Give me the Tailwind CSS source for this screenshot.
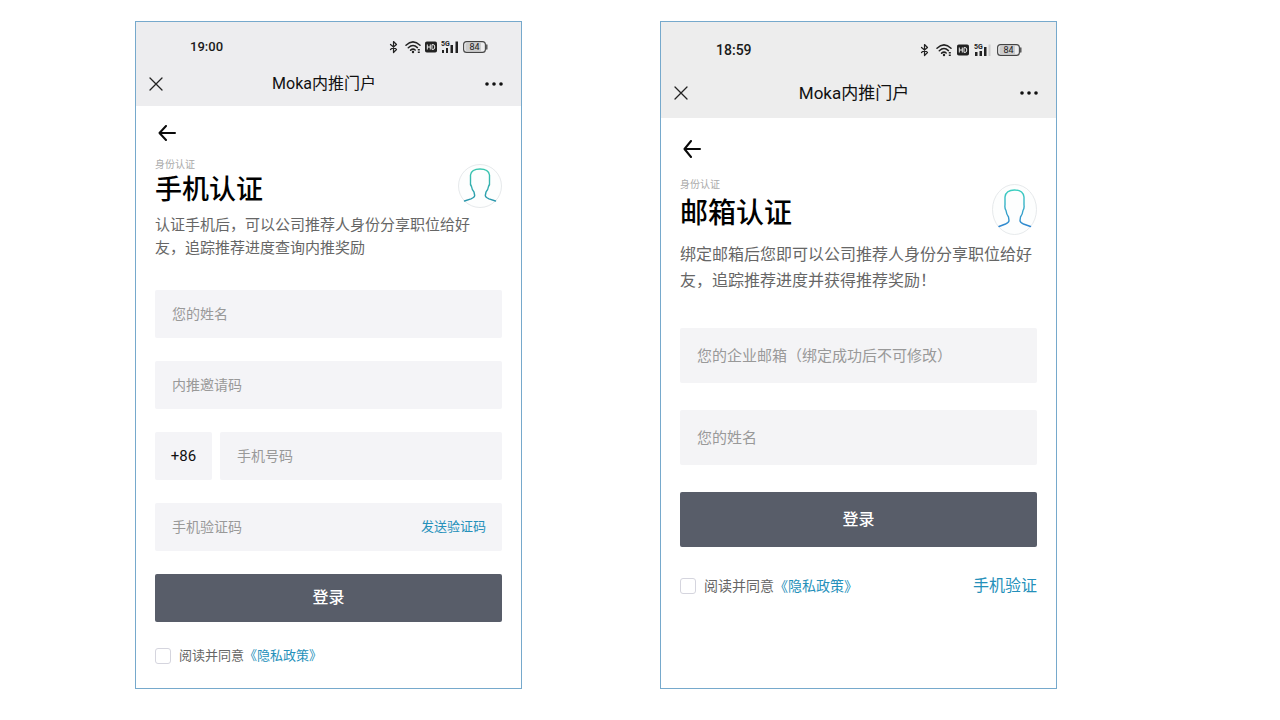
<!DOCTYPE html>
<html lang="zh-CN">
<head>
<meta charset="utf-8">
<meta name="viewport" content="width=device-width, initial-scale=1">
<title>Moka内推门户</title>
<script src="https://cdn.jsdelivr.net/npm/@tailwindcss/browser@4"></script>
</head>
<body class="bg-white font-[Roboto,'Noto_Sans_CJK_SC',sans-serif] text-black">
<svg class="absolute h-0 w-0" aria-hidden="true">
  <defs>
    <linearGradient id="face" x1="0" y1="0" x2="0" y2="1">
      <stop offset="0" stop-color="#3cc8b0"/><stop offset="1" stop-color="#2a97ad"/>
    </linearGradient>
    <linearGradient id="face-blue" x1="0" y1="0" x2="0" y2="1">
      <stop offset="0" stop-color="#3ccfc0"/><stop offset="1" stop-color="#2f86d0"/>
    </linearGradient>
    <symbol id="bluetooth" viewBox="0 0 9 14"><path d="M1.500 4.500l6 5-3 3V1.500l3 3-6 5" fill="none" stroke="#222" stroke-width="1.200" stroke-linejoin="round" stroke-linecap="round"/></symbol>
    <symbol id="wifi" viewBox="0 0 16 14"><g fill="none" stroke="#222" stroke-width="1.500" stroke-linecap="round"><path d="M1 5.200Q8-1.400 15 5.200M3.300 7.800Q8 3.400 12.400 7.600M5.600 10.200Q8 8.200 10.200 10"/></g><circle cx="8" cy="12" r="1.200" fill="#222"/><path d="M12.800 9h2v1.500h-2zM12.800 11.500h2V13h-2z" fill="#222"/></symbol>
    <symbol id="hd" viewBox="0 0 12 12"><rect y=".5" width="12" height="11" rx="1.800" fill="#222"/><path d="M2.300 3.500v5M5.300 3.500v5M2.300 6h3M7 3.500v5h.8q2 0 2-2.500t-2-2.500z" fill="none" stroke="#eee" stroke-width="1"/></symbol>
    <symbol id="battery" viewBox="0 0 25 12"><rect x=".6" y=".6" width="21.800" height="10.800" rx="3" fill="#ededee" stroke="#444" stroke-width="1.100"/><path d="M4 2h14v8H4a1.500 1.500 0 01-1.500-1.500v-5A1.500 1.500 0 014 2z" fill="#ccc"/><path d="M23.800 4v4" stroke="#444" stroke-width="1.300" stroke-linecap="round"/><text x="11.500" y="9.200" text-anchor="middle" font-family="Roboto" font-size="9" fill="#222">84</text></symbol>
    <symbol id="close" viewBox="0 0 14 14"><path d="M1 1l12 12M13 1L1 13" stroke="#222" stroke-width="1.300" stroke-linecap="round"/></symbol>
    <symbol id="more" viewBox="0 0 18 6"><g fill="#111"><circle cx="2" cy="3" r="1.800"/><circle cx="9" cy="3" r="1.800"/><circle cx="16" cy="3" r="1.800"/></g></symbol>
    <symbol id="back" viewBox="0 0 18 16"><path d="M8 1L1.500 8 8 15M1.500 8H17" fill="none" stroke="#0a0a0a" stroke-width="2" stroke-linecap="round" stroke-linejoin="round"/></symbol>
  </defs>
</svg>

<main class="grid grid-cols-[387fr_397fr] gap-x-[14.97%] pt-[21px] pr-[17.42%] pl-[10.55%]">

  <section class="flex min-h-[668px] flex-col border border-[#76a9cc]">
    <header class="bg-[#ededef] pt-[15px] pb-[10px]">
      <div class="flex h-5 items-center justify-between pr-[33px] pl-[54px]">
        <span class="text-[13px] leading-5 font-medium text-[#1a1a1a]">19:00</span>
        <div class="flex items-center gap-1">
          <svg class="mr-[3px] h-3.5 w-[9px]"><use href="#bluetooth"/></svg>
          <svg class="h-3.5 w-4"><use href="#wifi"/></svg>
          <svg class="h-3 w-3"><use href="#hd"/></svg>
          <svg class="h-3.5 w-[18px]" viewBox="0 0 18 14"><text x="0" y="6" font-family="Roboto" font-weight="700" font-size="7" fill="#222">5G</text><path d="M1 10h2v3H1zM5 8h2v5H5zM9.500 5H12v8H9.500zM14.500 1.500H17V13h-2.500z" fill="#222"/></svg>
          <svg class="h-3 w-[25px]"><use href="#battery"/></svg>
        </div>
      </div>
      <div class="mt-[15px] flex h-6 items-center justify-between pr-[18px] pl-[13px]">
        <button type="button" aria-label="关闭"><svg class="h-3.5 w-3.5"><use href="#close"/></svg></button>
        <h1 class="text-base leading-6 text-[#111]">Moka内推门户</h1>
        <button type="button" aria-label="更多"><svg class="h-1.5 w-[18px]"><use href="#more"/></svg></button>
      </div>
    </header>
    <form class="flex flex-col px-[19px] pt-[17px]">
      <button type="button" aria-label="返回" class="flex h-5 w-6 items-center justify-center"><svg class="h-4 w-[18px]"><use href="#back"/></svg></button>
      <div class="mt-[15px] flex items-end justify-between">
        <div>
          <p class="text-[10px] leading-[14px] text-[#aaa]">身份认证</p>
          <h2 class="text-[27px] leading-9 font-medium">手机认证</h2>
        </div>
        <svg class="h-11 w-11" viewBox="0 0 44 44"><circle cx="22" cy="22" r="21.500" fill="#fdfefe" stroke="#dfe3e6" stroke-width=".8"/><path d="M6.500 37L13 34.800Q16.500 33.500 16.700 31.500L16 28Q14 26 13.500 22.500Q12 20.500 12.500 17.500V11Q13.500 5 22 5T31.500 11V17.500Q32 20.500 30.500 22.500Q30 26 28 28L27.300 31.500Q27.500 33.500 31 34.800L37.500 37" fill="none" stroke="url(#face)" stroke-width="1.400" stroke-linecap="round" stroke-linejoin="round"/></svg>
      </div>
      <p class="mt-1.5 pr-5 text-[15px] leading-[23px] text-[#666]">认证手机后，可以公司推荐人身份分享职位给好友，追踪推荐进度查询内推奖励</p>
      <div class="mt-[30px] flex flex-col gap-[23px]">
        <input type="text" aria-label="您的姓名" placeholder="您的姓名" class="h-12 w-full rounded-xs bg-[#f4f4f7] px-[17px] text-sm placeholder:text-[#999]">
        <input type="text" aria-label="内推邀请码" placeholder="内推邀请码" class="h-12 w-full rounded-xs bg-[#f4f4f7] px-[17px] text-sm placeholder:text-[#999]">
        <div class="flex gap-2">
          <button type="button" aria-label="国家区号 +86" class="h-12 w-[57px] rounded-xs bg-[#f4f4f7] text-[15px] text-[#111]">+86</button>
          <input type="tel" aria-label="手机号码" placeholder="手机号码" class="h-12 min-w-0 flex-1 rounded-xs bg-[#f4f4f7] px-[17px] text-sm placeholder:text-[#999]">
        </div>
        <div class="flex h-12 items-center rounded-xs bg-[#f4f4f7] pr-4">
          <input type="text" aria-label="手机验证码" placeholder="手机验证码" class="h-full min-w-0 flex-1 bg-transparent px-[17px] text-sm placeholder:text-[#999]">
          <button type="button" class="text-[13px] text-[#2590ba]">发送验证码</button>
        </div>
        <button type="submit" class="h-12 rounded-xs bg-[#585d69] text-base font-medium text-white">登录</button>
      </div>
      <div class="mt-6 flex h-5 items-center">
        <input id="agree-phone" type="checkbox" class="h-4 w-4 appearance-none rounded-[3px] border border-[#d5d5de] bg-white checked:bg-[#585d69]">
        <label for="agree-phone" class="pl-2 text-[13px] leading-5 text-[#666]">阅读并同意</label>
        <a href="#privacy" class="text-[13px] leading-5 text-[#2590ba]">《隐私政策》</a>
      </div>
    </form>
  </section>

  <section class="flex min-h-[668px] flex-col border border-[#76a9cc]">
    <header class="bg-[#ededed] pt-[18px] pb-[13px]">
      <div class="flex h-5 items-center justify-between pr-[34px] pl-[55px]">
        <span class="text-sm leading-5 font-medium text-[#1a1a1a]">18:59</span>
        <div class="flex items-center gap-[5px]">
          <svg class="mr-[2px] h-3.5 w-[9px]"><use href="#bluetooth"/></svg>
          <svg class="h-3.5 w-4"><use href="#wifi"/></svg>
          <svg class="h-3 w-3"><use href="#hd"/></svg>
          <svg class="h-3.5 w-[18px]" viewBox="0 0 18 14"><text x="0" y="6" font-family="Roboto" font-weight="700" font-size="7" fill="#222">5G</text><path d="M1 9h2.500v4H1zM5.500 8H8v5H5.500zM10 4h2.500v9H10z" fill="#222"/><path d="M14.500 1.500h2V13h-2z" fill="#ccc"/></svg>
          <svg class="h-3 w-[25px]"><use href="#battery"/></svg>
        </div>
      </div>
      <div class="mt-[21px] flex h-6 items-center justify-between pr-[18px] pl-[13px]">
        <button type="button" aria-label="关闭"><svg class="h-3.5 w-3.5"><use href="#close"/></svg></button>
        <h1 class="text-[17px] leading-6 text-[#111]">Moka内推门户</h1>
        <button type="button" aria-label="更多"><svg class="h-1.5 w-[18px]"><use href="#more"/></svg></button>
      </div>
    </header>
    <form class="flex flex-col px-[19px] pt-[21px]">
      <button type="button" aria-label="返回" class="flex h-5 w-6 items-center justify-center"><svg class="h-[18px] w-[18px]" viewBox="0 0 18 18"><path d="M8 1L1.500 9 8 17M1.500 9H17" fill="none" stroke="#0a0a0a" stroke-width="2" stroke-linecap="round" stroke-linejoin="round"/></svg></button>
      <div class="mt-[19px] flex items-end justify-between">
        <div>
          <p class="text-[10px] leading-[14px] text-[#aaa]">身份认证</p>
          <h2 class="text-[28px] leading-[43px] font-medium">邮箱认证</h2>
        </div>
        <svg class="h-[51px] w-[45px]" viewBox="0 0 45 51"><ellipse cx="22.500" cy="25.500" rx="22" ry="25" fill="#fdfefe" stroke="#dfe3e6" stroke-width=".8"/><path d="M7 42.500L13.500 40Q17 38.500 17 36.500L16.500 33Q14.500 30.500 14 26.500Q12.500 24 13 21V13Q14 6 22.500 6T32 13V21Q32.500 24 31 26.500Q30.500 30.500 28.500 33L28 36.500Q28 38.500 31.500 40L38.500 42.500" fill="none" stroke="url(#face-blue)" stroke-width="1.400" stroke-linecap="round" stroke-linejoin="round"/></svg>
      </div>
      <p class="mt-[7px] text-base leading-[26px] text-[#666]">绑定邮箱后您即可以公司推荐人身份分享职位给好友，追踪推荐进度并获得推荐奖励！</p>
      <div class="mt-[34px] flex flex-col gap-[27px]">
        <input type="email" aria-label="您的企业邮箱" placeholder="您的企业邮箱（绑定成功后不可修改）" class="h-[55px] w-full rounded-xs bg-[#f4f4f6] px-[17px] text-[15px] placeholder:text-[#999]">
        <input type="text" aria-label="您的姓名" placeholder="您的姓名" class="h-[55px] w-full rounded-xs bg-[#f4f4f6] px-[17px] text-[15px] placeholder:text-[#999]">
        <button type="submit" class="h-[55px] rounded-xs bg-[#585d69] text-base font-medium text-white">登录</button>
      </div>
      <div class="mt-[29px] flex h-5 items-center">
        <input id="agree-mail" type="checkbox" class="h-4 w-4 appearance-none rounded-[3px] border border-[#d5d5de] bg-white checked:bg-[#585d69]">
        <label for="agree-mail" class="pl-2 text-sm leading-5 text-[#666]">阅读并同意</label>
        <a href="#privacy" class="text-sm leading-5 text-[#2590ba]">《隐私政策》</a>
        <a href="#phone" class="ml-auto text-base leading-5 text-[#2590ba]">手机验证</a>
      </div>
    </form>
  </section>
</main>
</body>
</html>
